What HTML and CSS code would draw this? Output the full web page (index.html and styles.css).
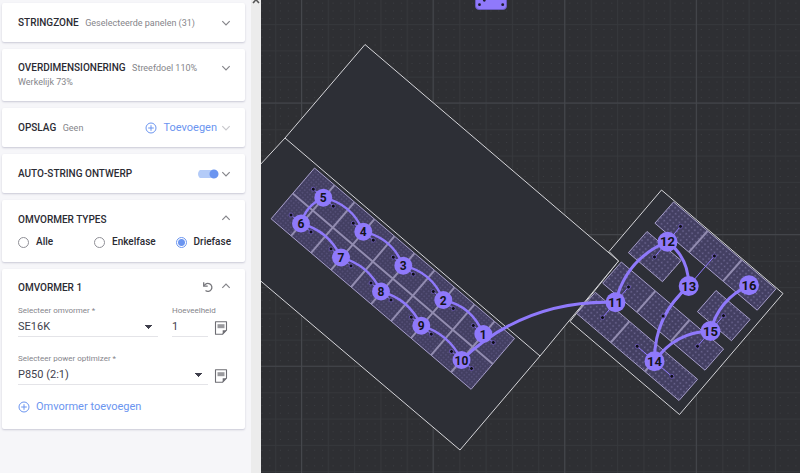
FILE: index.html
```html
<!DOCTYPE html>
<html lang="nl">
<head>
<meta charset="utf-8">
<title>Stringontwerp</title>
<link rel="stylesheet" href="styles.css">
</head>
<body>
<svg class="defs" aria-hidden="true">
  <symbol id="chevron" viewBox="0 0 10 10"><path d="M1.3 3.2 5 6.9l3.7-3.7" fill="none" stroke="currentColor" stroke-width="1.2"/></symbol>
  <symbol id="plus" viewBox="0 0 12 12"><path d="M6 3.2v5.6M3.2 6h5.6" stroke="currentColor" fill="none"/><circle cx="6" cy="6" r="5" fill="none" stroke="currentColor"/></symbol>
  <symbol id="note" viewBox="0 0 14 14"><path d="M1.5.7h11v8.5l-3.8 4H1.500z" fill="none" stroke="currentColor" stroke-width="1.1" stroke-linejoin="round"/><path d="M12.5 9.2H8.7v4z" fill="currentColor"/><path d="M3.5 3.2h7v4h-7z" fill="currentColor" opacity=".7"/></symbol>
</svg>
<div class="app">
  <aside class="sidebar">
    <section class="card row">
      <p class="head"><strong>STRINGZONE</strong> <span>Geselecteerde panelen (31)</span></p>
      <button class="icon" aria-label="Uitklappen"><svg><use href="#chevron"/></svg></button>
    </section>
    <section class="card row top">
      <p class="head"><strong>OVERDIMENSIONERING</strong> <span>Streefdoel 110%</span> <span>Werkelijk 73%</span></p>
      <button class="icon" aria-label="Uitklappen"><svg><use href="#chevron"/></svg></button>
    </section>
    <section class="card row">
      <p class="head"><strong>OPSLAG</strong> <span>Geen</span></p>
      <button class="add"><svg><use href="#plus"/></svg>Toevoegen</button>
      <button class="icon faint" aria-label="Uitklappen"><svg><use href="#chevron"/></svg></button>
    </section>
    <section class="card row">
      <label class="head" for="auto"><strong>AUTO-STRING ONTWERP</strong></label>
      <input class="switch" type="checkbox" id="auto" checked>
      <button class="icon" aria-label="Uitklappen"><svg><use href="#chevron"/></svg></button>
    </section>
    <section class="card types">
      <div class="line">
        <h2 class="head">OMVORMER TYPES</h2>
        <button class="icon up" aria-label="Inklappen"><svg><use href="#chevron"/></svg></button>
      </div>
      <div class="radios">
        <label><input type="radio" name="fase">Alle</label>
        <label><input type="radio" name="fase">Enkelfase</label>
        <label><input type="radio" name="fase" checked>Driefase</label>
      </div>
    </section>
    <section class="card inverter">
      <div class="line">
        <h2 class="head">OMVORMER 1</h2>
        <button class="undo" aria-label="Herstellen"><svg viewBox="0 0 12 12"><path d="M2.2 4.800A4 4 0 1 1 3.500 9.600" fill="none" stroke="currentColor" stroke-width="1.3"/><path d="M1.700 1.200v4h4" fill="none" stroke="currentColor" stroke-width="1.3"/></svg></button>
        <button class="icon up" aria-label="Inklappen"><svg><use href="#chevron"/></svg></button>
      </div>
      <div class="fields">
        <div class="field wide"><label for="inv">Selecteer omvormer *</label><select id="inv"><option>SE16K</option></select></div>
        <div class="field count"><label for="qty">Hoeveelheid</label><input id="qty" type="text" value="1"></div>
        <button class="note" aria-label="Notitie"><svg><use href="#note"/></svg></button>
      </div>
      <div class="fields">
        <div class="field wide"><label for="opt">Selecteer power optimizer *</label><select id="opt"><option>P850 (2:1)</option></select></div>
        <button class="note" aria-label="Notitie"><svg><use href="#note"/></svg></button>
      </div>
      <button class="add"><svg><use href="#plus"/></svg>Omvormer toevoegen</button>
    </section>
  </aside>
  <div class="track"><svg viewBox="0 0 8 6"><path d="M1 5 4 1.800 7 5" fill="none" stroke="#555" stroke-width="1.6"/></svg></div>
  <main class="canvas">
    <svg id="plan" viewBox="261 0 539 473" preserveAspectRatio="xMinYMin slice" role="img" aria-label="Dakplan met strings">
      <defs>
        <pattern id="minor" x="301.5" y="103" width="26.3" height="26.3" patternUnits="userSpaceOnUse">
          <path d="M0 0H26.3M0 0V26.3" stroke="#36383c" stroke-width="2"/>
          <path d="M4.800 5.300h17M4.800 13.100h17M4.800 21h17" stroke="#3c3e43" stroke-width="1" stroke-dasharray="1 6.850"/>
        </pattern>
        <pattern id="major" x="301" y="102.5" width="131.6" height="131.6" patternUnits="userSpaceOnUse">
          <path d="M0 .5H131.6M.5 0V131.6" stroke="#45474c"/>
        </pattern>
        <pattern id="cells" width="3.4" height="3.4" patternUnits="userSpaceOnUse" patternTransform="rotate(40.4)">
          <rect width="3.4" height="3.4" fill="#433f62"/><circle cx="1.7" cy="1.7" r=".7" fill="#655e8c"/>
        </pattern>
        <pattern id="cells2" width="4.2" height="4.2" patternUnits="userSpaceOnUse" patternTransform="rotate(40.4)">
          <rect width="4.2" height="4.2" fill="#433f62"/><circle cx="2.1" cy="2.1" r=".85" fill="#6f6994"/>
        </pattern>
      </defs>
      <rect x="261" width="1600" height="1600" fill="#2e2f33"/>
      <rect x="261" width="1600" height="1600" fill="url(#minor)"/>
      <rect x="261" width="1600" height="1600" fill="url(#major)"/>
      <g class="roof">
        <path d="M661.5 190 609 251.5 618.5 261 570 321.5 679.5 414.5 783 293.5z"/>
        <path d="M365 44.5 618.5 261 540 356 460 450 200 229.5 285 138z"/>
        <path d="M285 138 540 356"/>
      </g>
      <g id="panels"></g>
      <g id="strings" class="string">
        <path d="M323.3 197.7Q352 204 363.3 231.7Q392 238 403.3 265.7Q432 272 443.3 300Q472 306 483.3 334"/>
        <path d="M323.3 197.7Q306 205.5 301 223.5Q329 231 341 257.4Q369 265 381 291.5Q409 299 421.3 325.7Q449 334 461.5 360"/>
        <path class="thick" d="M461.5 360Q526 299 615.5 302.3Q626 259 667.5 241.7Q689 258 688.7 286Q654 316 654.5 361.3Q675 332 710.5 331Q719 299 749 285.3"/>
      </g>
      <g id="nodes"></g>
      <g>
        <rect x="475.5" y="-12" width="31" height="21.5" rx="3.5" fill="#8f79fb" stroke="#6b5bc0"/>
        <g fill="#1c1a2b"><circle cx="479.5" cy="4.700" r="1.4"/><circle cx="502.7" cy="4.700" r="1.4"/><circle cx="484.3" cy=".3" r="1.4"/></g>
      </g>
    </svg>
  </main>
</div>
<script src="plan.js"></script>
</body>
</html>
```
FILE: styles.css
```css
* { box-sizing: border-box; }
body { margin: 0; font-family: Roboto, "Liberation Sans", sans-serif; font-size: 11px; color: #2b2b33; }
button { border: 0; padding: 0; background: none; font: inherit; color: inherit; display: flex; align-items: center; flex: none; }
p, h2 { margin: 0; }
.defs { position: absolute; width: 0; height: 0; }
.app { display: flex; height: 100vh; overflow: hidden; }
.sidebar { flex: 0 0 251px; background: #f6f6f9; padding: 3px 6px 0 2px; display: flex; flex-direction: column; gap: 7px; }
.track { flex: 0 0 10px; background: #ececec; }
.track svg { display: block; width: 8px; height: 6px; margin: -2px auto 0; }
.canvas { flex: 1; min-width: 0; background: #2e2f33; }
.canvas > svg { display: block; width: 100%; height: 100%; }

.card { background: #fff; border-radius: 2px; box-shadow: 0 1px 2px #c9c9d6; padding: 0 14px 0 16px; flex: none; }
.row { display: flex; align-items: center; min-height: 39px; }
.row.top { align-items: flex-start; padding-top: 12px; padding-bottom: 12px; }
.head { flex: 1; line-height: 14px; font-size: 10px; font-weight: 500; }
.head strong { font-weight: 500; margin-right: 4px; }
.head span { display: inline-block; font-size: 9px; font-weight: 400; color: #85858a; }
.icon { color: #85858a; }
.icon svg { width: 10px; height: 10px; }
.row.top .icon { margin-top: 2px; }
.icon.up { transform: scaleY(-1); }
.icon.faint { color: #c8c8cc; }
.add { color: #6b95f0; font-size: 11px; gap: 6px; }
.add svg { width: 12px; height: 12px; }
.row .add { margin-right: 4px; }

.switch { appearance: none; margin: 0 2px 0 0; width: 21px; height: 10px; border-radius: 5px; flex: none;
  background: radial-gradient(circle at 16px 5px, #6b95f0 4px, transparent 5px), linear-gradient(#b3cbf8, #b3cbf8) 0 1px / 18px 8px no-repeat; }

.line { display: flex; align-items: flex-start; }
.types { padding-top: 13px; padding-bottom: 13px; }
.radios { display: grid; grid-template-columns: 76px 1fr auto; margin-top: 8px; line-height: 14px; font-size: 10px; font-weight: 500; }
.radios label { display: flex; align-items: center; gap: 7px; }
.radios input { appearance: none; margin: 0; width: 11px; height: 11px; border: 1px solid #8f8f96; border-radius: 50%; }
.radios input:checked { border-color: #6b95f0; background: radial-gradient(circle, #6b95f0 3px, transparent 4px); }

.inverter { padding-top: 12px; padding-bottom: 16px; }
.undo { color: #77777c; margin-right: 7px; }
.undo svg { width: 12px; height: 12px; }
.fields { display: flex; align-items: flex-end; margin-top: 10px; }
.fields + .fields { margin-top: 16px; }
.field { display: flex; flex-direction: column; border-bottom: 1px solid #e4e4e8; }
.field label { font-size: 8px; line-height: 12px; color: #85858b; white-space: nowrap; }
.wide { flex: 1; }
.count { flex: 0 0 36px; min-width: 0; margin-left: 14px; }
.field select, .field input { appearance: none; border: 0; background: none; padding: 0; margin: 0; width: 100%; min-width: 0; height: 19px; font: 11px/19px Roboto, sans-serif; color: #3f3f4c; }
.field select { background: linear-gradient(to bottom right, #3f3f4c 50%, transparent 50%) right 5px center / 4px 4px no-repeat, linear-gradient(to bottom left, #3f3f4c 50%, transparent 50%) right 9px center / 4px 4px no-repeat; }
.note { color: #6d6d73; margin: 0 3px 2px 6px; }
.note svg { width: 14px; height: 14px; }
.inverter > .add { margin-top: 15px; }

.roof path { fill: #2d2f36; stroke: #d6d6da; stroke-width: 1; }
.string path { fill: none; stroke: #8f79fb; stroke-width: 2.4; }
.string .thick { stroke-width: 3; }
.node { fill: #8f79fb; }
.lead { stroke: #8f79fb; stroke-width: 1; }
.dot { fill: #0d0d14; stroke: #6757ad; stroke-width: 1; }
.num { font-family: Roboto, sans-serif; font-weight: 700; text-anchor: middle; fill: #14141c; }
```
FILE: plan.js
```js
const NS = "http://www.w3.org/2000/svg";
const panels = document.getElementById("panels");
const nodes = document.getElementById("nodes");

function add(parent, tag, attrs, text) {
  const el = document.createElementNS(NS, tag);
  for (const key in attrs) el.setAttribute(key, attrs[key]);
  if (text) el.textContent = text;
  parent.append(el);
  return el;
}

// A block of panels: origin corner, panel edge vectors, columns and rows.
function block(x, y, u, v, cols, rows, fill) {
  const w = [u[0] * cols, u[1] * cols], h = [v[0] * rows, v[1] * rows];
  add(panels, "path", { d: `M${x} ${y}l${w}l${h}l${-w[0]} ${-w[1]}z`, fill: `url(#${fill})`, stroke: "#a79fca" });
  let d = "";
  for (let c = 1; c < cols; c++) d += `M${x + u[0] * c} ${y + u[1] * c}l${h}`;
  for (let r = 1; r < rows; r++) d += `M${x + v[0] * r} ${y + v[1] * r}l${w}`;
  if (d) add(panels, "path", { d, fill: "none", stroke: "#928cb0", "stroke-width": 2 });
}

block(314.5, 168, [20, 17.05], [-21.7, 25.4], 10, 2, "cells");
const U = [34.1, 29], V = [-18.6, 21.2];
block(673.5, 202, U, V, 3, 1, "cells2");
block(647, 231.5, U, V, 1, 1, "cells2");
block(621.3, 262, U, V, 3, 1, "cells2");
block(595.3, 292.3, U, V, 3, 1, "cells2");
block(716, 290.5, U, V, 1, 1, "cells2");

// Number, centre, and half the span between the two optimizer ends.
const list = [
  [5, 323.3, 197.7], [4, 363.3, 231.7], [3, 403.3, 265.7], [2, 443.3, 300], [1, 483.3, 334],
  [6, 301, 223.5], [7, 341, 257.4], [8, 381, 291.5], [9, 421.3, 325.7], [10, 461.5, 360],
  [11, 615.5, 302.3, 13, -15.3], [12, 667.5, 241.7, 13, -15.3], [13, 688.7, 286, 25.7, -30],
  [14, 654.5, 361.3, 17.3, 15], [15, 710.5, 331, 13, -15.3], [16, 749, 285.3, 0, 0]
];
for (const [n, x, y, dx = 10, dy = 8.5] of list) {
  add(nodes, "line", { class: "lead", x1: x - dx, y1: y - dy, x2: x + dx, y2: y + dy });
  for (const s of [-1, 1]) add(nodes, "circle", { class: "dot", cx: x + s * dx, cy: y + s * dy, r: 2 });
}
for (const [n, x, y] of list) {
  const big = n > 10;
  add(nodes, "circle", { class: "node", cx: x, cy: y, r: big ? 10 : 9 });
  add(nodes, "text", { class: "num", x, y: y + 4.5, "font-size": big ? 13 : 12 }, String(n));
}
```
